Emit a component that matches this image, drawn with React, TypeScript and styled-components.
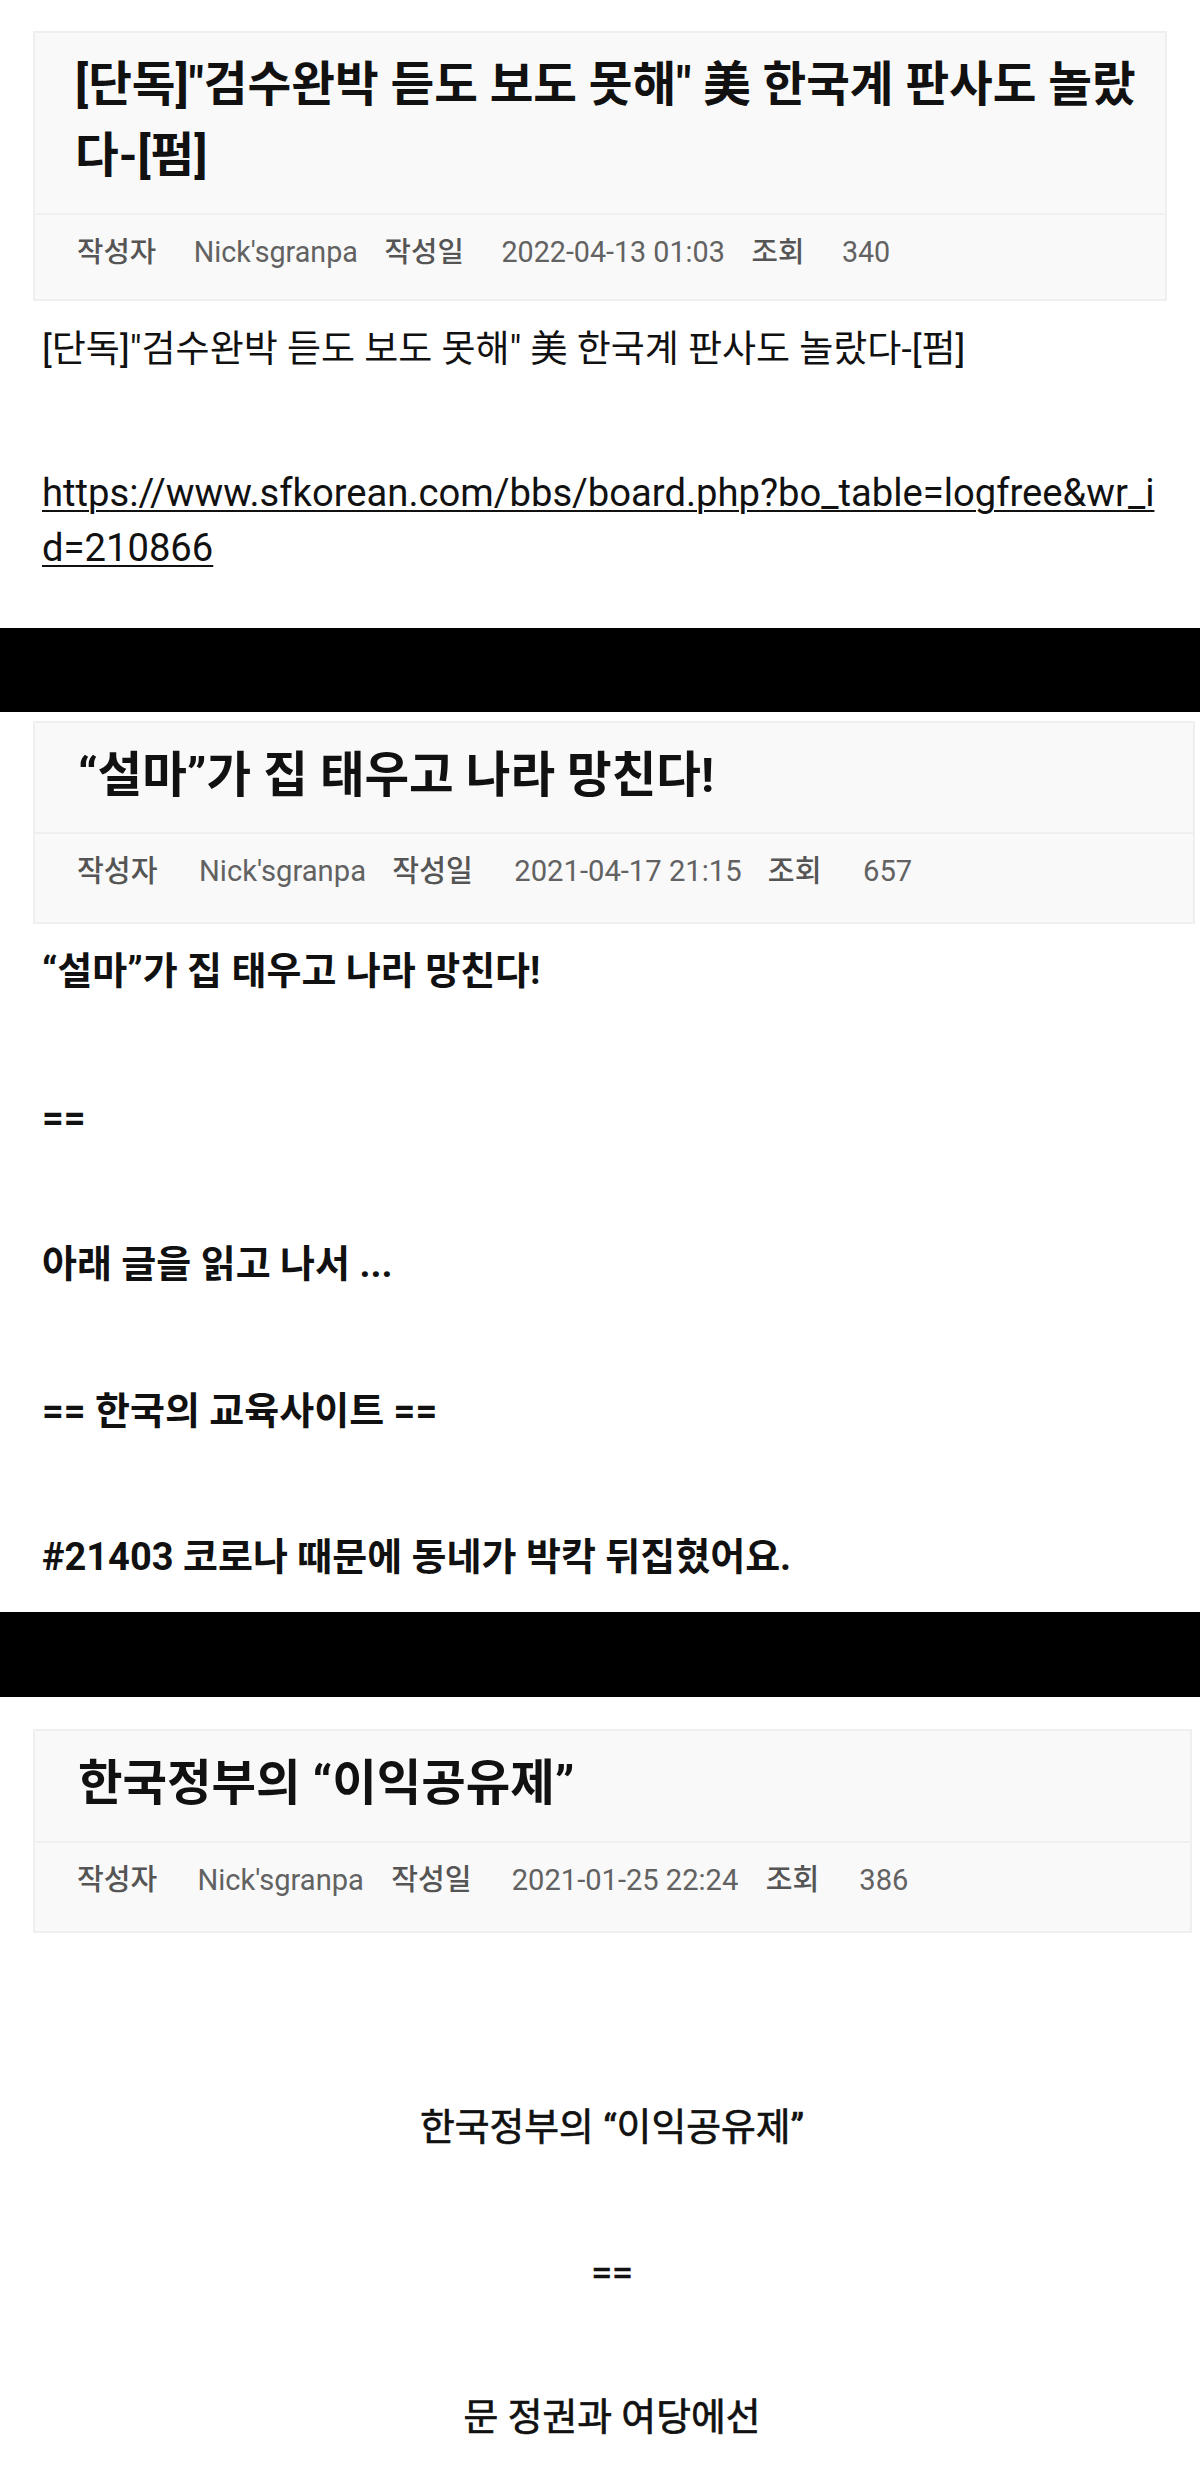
import React from "react";
import styled, { createGlobalStyle } from "styled-components";

const GlobalStyle = createGlobalStyle`
  html, body {
    margin: 0;
    padding: 0;
    background: #ffffff;
  }
  body {
    font-family: "Roboto", "Noto Sans CJK KR", "Noto Sans", sans-serif;
    color: #111111;
    -webkit-font-smoothing: antialiased;
  }
  * { box-sizing: border-box; }
`;

const Page = styled.main`
  display: flex;
  flex-direction: column;
  padding-top: 31px;
  width: 1200px;
`;

const Post = styled.article`
  display: flex;
  flex-direction: column;
`;

const HeaderBox = styled.header<{ $right: number; $top: number }>`
  margin: ${(p) => p.$top}px ${(p) => p.$right}px 0 33px;
  border: 2px solid #efefef;
  background: #f9f9f9;
  display: flex;
  flex-direction: column;
`;

const Title = styled.h1<{ $size: number; $left: number }>`
  margin: 0;
  padding: 17px 12px 20px ${(p) => p.$left}px;
  font-size: ${(p) => p.$size}px;
  line-height: 1.5;
  font-weight: 700;
  color: #111111;
  border-bottom: 2px solid #efefef;
`;

const MetaRow = styled.div<{ $size: number; $bottom: number }>`
  display: flex;
  align-items: center;
  padding: 17px 20px ${(p) => p.$bottom}px 42px;
  font-size: ${(p) => p.$size}px;
  line-height: 1.4;
  color: #5a5a5a;
`;

const MetaLabel = styled.span<{ $gap: number }>`
  font-weight: 500;
  color: #555555;
  margin-right: ${(p) => p.$gap}em;
`;

const MetaValue = styled.span<{ $gap: number }>`
  font-weight: 400;
  color: #626262;
  margin-right: ${(p) => p.$gap}em;
`;

const Body = styled.section<{ $top: number; $bottom: number; $center?: boolean; $gap: number }>`
  display: flex;
  flex-direction: column;
  gap: ${(p) => p.$gap}px;
  padding: ${(p) => p.$top}px ${(p) => (p.$center ? 18 : 40)}px ${(p) => p.$bottom}px 42px;
  text-align: ${(p) => (p.$center ? "center" : "left")};
`;

const Para = styled.p<{ $size: number; $weight: number; $thick?: boolean }>`
  margin: 0;
  font-size: ${(p) => p.$size}px;
  line-height: 55px;
  font-weight: ${(p) => p.$weight};
  color: #111111;
  word-break: break-all;
  -webkit-text-stroke: ${(p) => (p.$thick ? "0.7px #111111" : "0")};
`;

const Link = styled.a`
  color: #111111;
  font-size: 38.2px;
  text-decoration: underline;
  text-underline-offset: 4px;
  text-decoration-thickness: 1.5px;
`;

const Band = styled.div<{ $h: number }>`
  width: 100%;
  height: ${(p) => p.$h}px;
  background: #000000;
`;

type MetaProps = {
  size: number;
  bottom: number;
  labelGap: number;
  valueGap: number;
  date: string;
  views: string;
};

const Meta = ({ size, bottom, labelGap, valueGap, date, views }: MetaProps) => (
  <MetaRow $size={size} $bottom={bottom}>
    <MetaLabel $gap={labelGap}>작성자</MetaLabel>
    <MetaValue $gap={valueGap}>Nick'sgranpa</MetaValue>
    <MetaLabel $gap={labelGap}>작성일</MetaLabel>
    <MetaValue $gap={valueGap}>{date}</MetaValue>
    <MetaLabel $gap={labelGap}>조회</MetaLabel>
    <MetaValue $gap={valueGap}>{views}</MetaValue>
  </MetaRow>
);

export default function App() {
  return (
    <>
      <GlobalStyle />
      <Page>
        <Post>
          <HeaderBox $right={33} $top={0}>
            <Title $size={47.5} $left={40}>
              [단독]"검수완박 듣도 보도 못해" 美 한국계 판사도 놀랐다-[펌]
            </Title>
            <Meta size={28.7} bottom={27} labelGap={1.31} valueGap={0.93} date="2022-04-13 01:03" views="340" />
          </HeaderBox>
          <Body $top={21} $bottom={52} $gap={89}>
            <Para $size={37} $weight={400}>
              [단독]"검수완박 듣도 보도 못해" 美 한국계 판사도 놀랐다-[펌]
            </Para>
            <Para $size={37} $weight={400}>
              <Link href="#">https://www.sfkorean.com/bbs/board.php?bo_table=logfree&amp;wr_id=210866</Link>
            </Para>
          </Body>
        </Post>

        <Band $h={84} />

        <Post>
          <HeaderBox $right={5} $top={9}>
            <Title $size={48.5} $left={43}>“설마”가 집 태우고 나라 망친다!</Title>
            <Meta size={29.2} bottom={30} labelGap={1.42} valueGap={0.9} date="2021-04-17 21:15" views="657" />
          </HeaderBox>
          <Body $top={20} $bottom={27} $gap={91.5}>
            <Para $size={38} $weight={700}>“설마”가 집 태우고 나라 망친다!</Para>
            <Para $size={38} $weight={700}>==</Para>
            <Para $size={38} $weight={700}>아래 글을 읽고 나서 ...</Para>
            <Para $size={38} $weight={700}>== 한국의 교육사이트 ==</Para>
            <Para $size={38} $weight={700}>#21403 코로나 때문에 동네가 박칵 뒤집혔어요.</Para>
          </Body>
        </Post>

        <Band $h={85} />

        <Post>
          <HeaderBox $right={8} $top={32}>
            <Title $size={48.4} $left={43}>한국정부의 “이익공유제”</Title>
            <Meta size={29.1} bottom={30} labelGap={1.38} valueGap={0.94} date="2021-01-25 22:24" views="386" />
          </HeaderBox>
          <Body $top={167} $bottom={24} $gap={90} $center>
            <Para $size={37.8} $weight={400} $thick>한국정부의 “이익공유제”</Para>
            <Para $size={37.8} $weight={400} $thick>==</Para>
            <Para $size={37.8} $weight={400} $thick>문 정권과 여당에선</Para>
          </Body>
        </Post>
      </Page>
    </>
  );
}
